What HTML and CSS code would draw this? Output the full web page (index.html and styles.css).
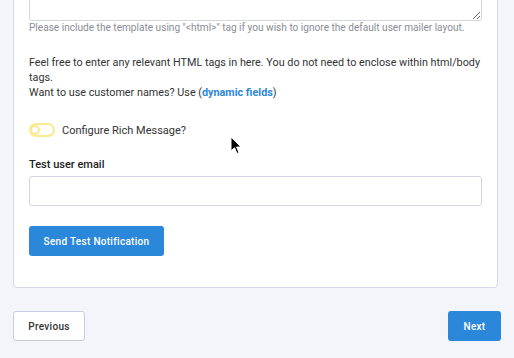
FILE: index.html
```html
<!DOCTYPE html>
<html lang="en">
<head>
    <meta charset="UTF-8">
    <meta name="viewport" content="width=device-width, initial-scale=1.0">
    <title>Notification Setup</title>
    <link rel="stylesheet" href="styles.css">
</head>
<body>
    <div class="page">
        <div class="card">
            <textarea class="template-input"></textarea>
            <p class="hint">Please include the template using "&lt;html&gt;" tag if you wish to ignore the default user mailer layout.</p>

            <p class="notes">
                Feel free to enter any relevant HTML tags in here. You do not need to enclose within html/body tags.<br>
                Want to use customer names? Use (<a href="#" class="link">dynamic fields</a>)
            </p>

            <label class="toggle-row">
                <span class="toggle"><span class="knob"></span></span>
                Configure Rich Message?
            </label>

            <div class="field">
                <label class="field-label" for="testEmail">Test user email</label>
                <input type="text" id="testEmail" class="text-input">
            </div>

            <button class="btn btn-primary btn-send">Send Test Notification</button>
        </div>

        <div class="footer">
            <button class="btn btn-secondary">Previous</button>
            <button class="btn btn-primary">Next</button>
        </div>
    </div>

    <!-- mouse pointer captured in the screenshot -->
    <svg class="pointer" width="12" height="19" viewBox="0 0 12 19">
        <path d="M1 1 L1 15 L4.5 11.8 L7 17.5 L9 16.6 L6.6 11 L11 11 Z" fill="#000" stroke="#fff" stroke-width="1" stroke-linejoin="round"/>
    </svg>
</body>
</html>
```

FILE: styles.css
```css
body {
    font-family: Roboto, 'Liberation Sans', sans-serif;
    margin: 0;
    padding: 0;
    background: #f4f5fa;
    color: #333;
    overflow: hidden;
}
.page {
    width: 488px;
    margin-left: 13px;
}
.card {
    width: 485px;
    background: white;
    border: 1px solid #d5d9e8;
    border-radius: 4px;
    margin-top: -75px;
    padding: 16px 15px 31px;
    box-sizing: border-box;
}
.template-input {
    display: block;
    width: 100%;
    height: 79px;
    border: 1px solid #d3d6e2;
    border-radius: 3px;
    box-sizing: border-box;
    margin: 0;
}
.hint {
    font-size: 10.1px;
    color: #8a8e96;
    margin: 0;
    line-height: 14px;
}
.notes {
    font-size: 10.8px;
    line-height: 15px;
    color: #333;
    margin: 20px 0 0;
}
.link {
    color: #2b87da;
    font-weight: 700;
    text-decoration: none;
}
.toggle-row {
    display: flex;
    align-items: center;
    gap: 7px;
    font-size: 11px;
    color: #333;
    margin-top: 23px;
}
.toggle {
    width: 26px;
    height: 14px;
    border: 2px solid #fbea8c;
    border-radius: 8px;
    box-sizing: border-box;
    display: flex;
    align-items: center;
}
.knob {
    width: 10px;
    height: 10px;
    border: 2px solid #fbea8c;
    border-radius: 50%;
    box-sizing: border-box;
    margin-left: -1px;
}
.field {
    margin-top: 21px;
}
.field-label {
    display: block;
    font-size: 11px;
    font-weight: 500;
    color: #222;
    margin-bottom: 5px;
}
.text-input {
    display: block;
    width: 100%;
    height: 30px;
    border: 1px solid #d3d6e2;
    border-radius: 3px;
    box-sizing: border-box;
}
.btn {
    height: 30px;
    padding: 0;
    border-radius: 3px;
    font-family: Roboto, 'Liberation Sans', sans-serif;
    font-size: 10px;
    font-weight: 500;
    letter-spacing: 0.3px;
    white-space: nowrap;
    cursor: pointer;
}
.btn-primary {
    background: #2b87da;
    color: white;
    border: none;
}
.btn-secondary {
    background: white;
    color: #333;
    border: 1px solid #c8cde0;
    width: 72px;
}
.btn-send {
    margin-top: 20px;
    width: 135px;
}
.footer {
    display: flex;
    justify-content: space-between;
    margin-top: 23px;
}
.footer .btn-primary {
    width: 53px;
}
.pointer {
    position: absolute;
    left: 230px;
    top: 136px;
}
```
